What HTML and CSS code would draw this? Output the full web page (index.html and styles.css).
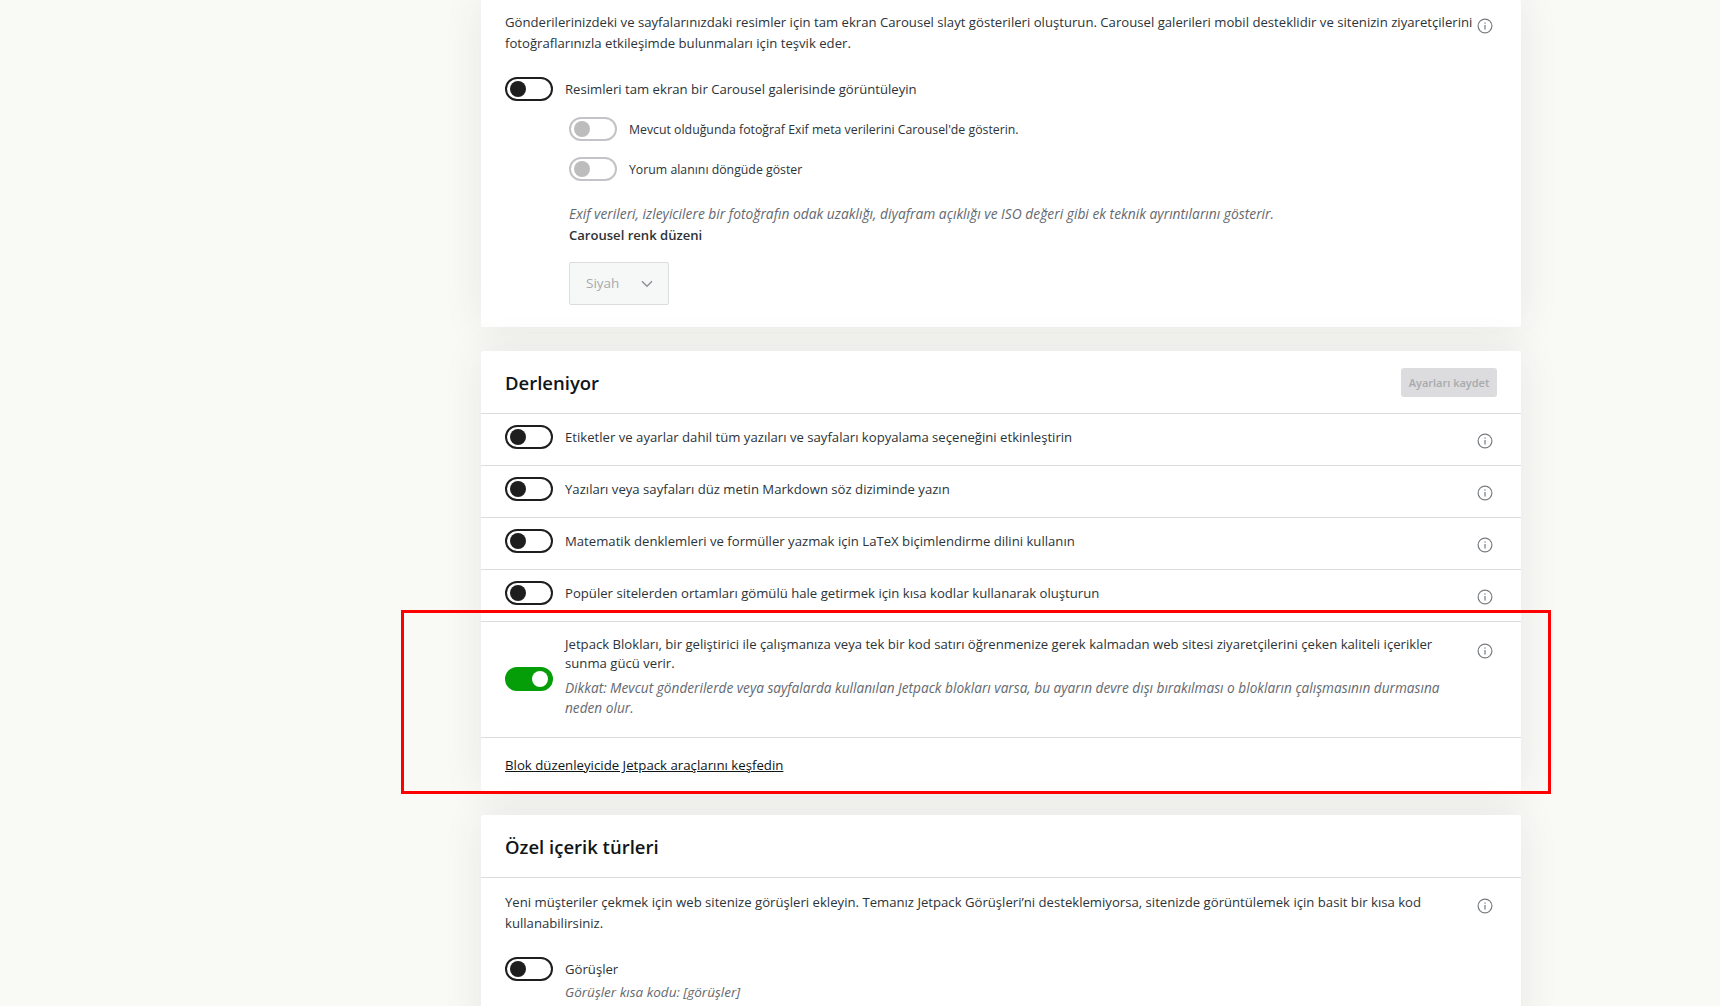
FILE: index.html
```html
<!DOCTYPE html>
<html lang="tr">
<head>
<meta charset="utf-8">
<title>Jetpack ayarları</title>
<link rel="stylesheet" href="styles.css">
</head>
<body>
<svg class="defs" width="0" height="0" aria-hidden="true"><symbol id="info" viewBox="0 0 16 16"><circle cx="8" cy="8" r="6.9" fill="none" stroke="currentColor" stroke-width="1.2"/><rect x="7.4" y="7" width="1.2" height="4.6" fill="currentColor"/><rect x="7.4" y="4.4" width="1.2" height="1.3" fill="currentColor"/></symbol></svg>
<main class="page">
  <section class="card card-first">
    <div class="desc-row">
      <p class="desc">Gönderilerinizdeki ve sayfalarınızdaki resimler için tam ekran Carousel slayt gösterileri oluşturun. Carousel galerileri mobil desteklidir ve sitenizin ziyaretçilerini fotoğraflarınızla etkileşimde bulunmaları için teşvik eder.</p>
      <svg class="info info-top"><use href="#info"/></svg>
    </div>
    <label class="opt opt-main"><span class="toggle"></span><span>Resimleri tam ekran bir Carousel galerisinde görüntüleyin</span></label>
    <div class="sub">
      <label class="opt opt-sub"><span class="toggle disabled"></span><span class="small">Mevcut olduğunda fotoğraf Exif meta verilerini Carousel'de gösterin.</span></label>
      <label class="opt opt-sub"><span class="toggle disabled"></span><span class="small">Yorum alanını döngüde göster</span></label>
      <p class="note exif">Exif verileri, izleyicilere bir fotoğrafın odak uzaklığı, diyafram açıklığı ve ISO değeri gibi ek teknik ayrıntılarını gösterir.</p>
      <p class="strong">Carousel renk düzeni</p>
      <div class="select"><span>Siyah</span><svg class="chev" viewBox="0 0 12 8"><path d="M1 1.2 6 6.2 11 1.2" fill="none" stroke="currentColor" stroke-width="1.4"/></svg></div>
    </div>
  </section>

  <section class="card">
    <header class="card-head"><h2>Derleniyor</h2><button class="save" type="button">Ayarları kaydet</button></header>
    <div class="row"><span class="toggle"></span><span class="row-text">Etiketler ve ayarlar dahil tüm yazıları ve sayfaları kopyalama seçeneğini etkinleştirin</span><svg class="info"><use href="#info"/></svg></div>
    <div class="row"><span class="toggle"></span><span class="row-text">Yazıları veya sayfaları düz metin Markdown söz diziminde yazın</span><svg class="info"><use href="#info"/></svg></div>
    <div class="row"><span class="toggle"></span><span class="row-text">Matematik denklemleri ve formüller yazmak için LaTeX biçimlendirme dilini kullanın</span><svg class="info"><use href="#info"/></svg></div>
    <div class="row"><span class="toggle"></span><span class="row-text">Popüler sitelerden ortamları gömülü hale getirmek için kısa kodlar kullanarak oluşturun</span><svg class="info"><use href="#info"/></svg></div>
    <div class="row row-tall">
      <span class="toggle on"></span>
      <div class="row-text">
        <p class="tight">Jetpack Blokları, bir geliştirici ile çalışmanıza veya tek bir kod satırı öğrenmenize gerek kalmadan web sitesi ziyaretçilerini çeken kaliteli içerikler sunma gücü verir.</p>
        <p class="note warn">Dikkat: Mevcut gönderilerde veya sayfalarda kullanılan Jetpack blokları varsa, bu ayarın devre dışı bırakılması o blokların çalışmasının durmasına neden olur.</p>
      </div>
      <svg class="info"><use href="#info"/></svg>
    </div>
    <div class="foot"><a href="#">Blok düzenleyicide Jetpack araçlarını keşfedin</a></div>
  </section>

  <section class="card card-last">
    <header class="card-head plain"><h2>Özel içerik türleri</h2></header>
    <div class="desc-row desc-row-last">
      <p class="desc">Yeni müşteriler çekmek için web sitenize görüşleri ekleyin. Temanız Jetpack Görüşleri’ni desteklemiyorsa, sitenizde görüntülemek için basit bir kısa kod kullanabilirsiniz.</p>
      <svg class="info info-last"><use href="#info"/></svg>
    </div>
    <label class="opt opt-main opt-last"><span class="toggle"></span><span>Görüşler</span></label>
    <p class="note under">Görüşler kısa kodu: [görüşler]</p>
  </section>
  <div class="highlight"></div>
</main>
</body>
</html>
```
FILE: styles.css
```css
* { box-sizing: border-box; }
html, body { margin: 0; height: 1006px; overflow: hidden; }
body {
  background: #f9f9f6;
  color: #2c3338;
  font-family: "Open Sans", "Noto Sans", sans-serif;
  font-size: 13.15px;
  line-height: 21px;
}
p { margin: 0; }
.defs { position: absolute; }
.page {
  position: relative;
  width: 1040px;
  margin-left: 481px;
  display: flex;
  flex-direction: column;
  gap: 24px;
}
.card {
  background: #fff;
  border-radius: 2px;
  box-shadow: 0 0 40px rgba(60, 60, 40, 0.09);
  flex: none;
}
.card-first { height: 327px; padding: 12px 24px 0; }
.card-last { height: 260px; }
.desc-row { display: flex; }
.desc { flex: none; width: 972px; }
.card-first .desc { margin-right: -4px; width: 976px; }
.info { width: 16px; height: 16px; flex: none; color: #787c82; margin-right: 4px; margin-left: auto; }
.info-top { margin-top: 6px; }
.info-last { margin-top: 6px; }
.opt { display: flex; align-items: center; gap: 12px; }
.opt-main { margin-top: 23px; height: 24px; }
.toggle {
  position: relative;
  display: block;
  flex: none;
  width: 48px;
  height: 24px;
  border: 2px solid #1e1e1e;
  border-radius: 12px;
  background: #fff;
}
.toggle::after {
  content: "";
  position: absolute;
  left: 3px;
  top: 2px;
  width: 16px;
  height: 16px;
  border-radius: 50%;
  background: #1e1e1e;
}
.toggle.disabled { border-color: #c3c4c7; }
.toggle.disabled::after { background: #bdbdbd; }
.toggle.on { border-color: #069e08; background: #069e08; }
.toggle.on::after { left: auto; right: 3px; background: #fff; }
.sub { margin-left: 64px; margin-top: 16px; }
.opt-sub { height: 24px; margin-bottom: 16px; }
.small { font-size: 12.3px; }
.note { font-style: italic; color: #646970; }
.exif { font-size: 13.8px; margin-top: 22px; }
.strong { font-weight: 600; font-size: 13.07px; margin-top: 1px; color: #2c3338; }
.select {
  display: flex;
  align-items: center;
  justify-content: space-between;
  width: 100px;
  height: 43px;
  margin-top: 16px;
  padding: 0 15px 0 16px;
  background: #f6f7f7;
  border: 1px solid #dcdcde;
  border-radius: 2px;
  color: #a7aaad;
  font-size: 13.5px;
}
.chev { width: 12px; height: 8px; color: #8c8f94; }
.card-head {
  display: flex;
  align-items: center;
  justify-content: space-between;
  height: 63px;
  padding: 1px 24px 0;
  border-bottom: 1px solid #dcdcde;
}
.card-head h2 { margin: 0; font-size: 18.5px; font-weight: 600; color: #101517; line-height: 26px; }
.save {
  width: 96px;
  height: 29px;
  padding: 0;
  border: 0;
  border-radius: 3px;
  background: #dcdcde;
  color: #a7aaad;
  font: 600 11px/29px "Open Sans", sans-serif;
}
.row {
  display: flex;
  align-items: center;
  gap: 12px;
  height: 52px;
  padding: 0 24px 6px;
  border-bottom: 1px solid #dcdcde;
}
.row-text { flex: 1; padding-top: 2px; }
.row .info { margin-top: 9px; }
.row-tall { height: 116px; padding-bottom: 2px; }
.row-tall .info { align-self: flex-start; margin-top: 21px; }
.row-tall .row-text { padding: 0 20px 4px 0; }
.tight { line-height: 19px; }
.warn { font-size: 13.67px; margin-top: 5px; line-height: 20px; }
.foot { height: 53px; padding: 17px 24px 0; }
.foot a { color: #101517; text-decoration: underline; font-size: 13.24px; }
.desc-row-last { padding: 14px 24px 0; }
.opt-last { margin: 23px 24px 0; }
.under { margin: 1px 0 0 84px; font-size: 13.5px; }
.highlight {
  position: absolute;
  left: -80px;
  top: 610px;
  width: 1150px;
  height: 184px;
  border: 3px solid #f00;
  pointer-events: none;
}
```
